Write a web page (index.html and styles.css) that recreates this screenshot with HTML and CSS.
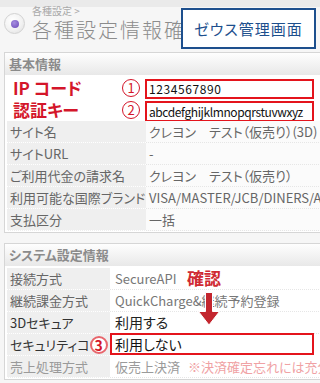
FILE: index.html
```html
<!DOCTYPE html>
<html lang="ja">
<head>
    <meta charset="UTF-8">
    <meta name="viewport" content="width=device-width, initial-scale=1.0">
    <title>各種設定情報確認</title>
    <link rel="stylesheet" href="styles.css">
</head>
<body>

    <div class="top">
        <div class="orb"><span></span></div>
        <div class="head-text">
            <div class="crumb">各種設定 &gt;</div>
            <h1>各種設定情報確認</h1>
        </div>
        <div class="zeus">ゼウス管理画面</div>
    </div>

    <section class="panel">
        <div class="panel-head">基本情報</div>
        <div class="rows">
            <div class="label key"><span class="callout">IP コード</span><span class="num">1</span></div>
            <div class="value boxed"><div class="mark digits">1234567890</div></div>

            <div class="label key"><span class="callout">認証キー</span><span class="num">2</span></div>
            <div class="value boxed"><div class="mark second">abcdefghijklmnopqrstuvwxyz</div></div>

            <div class="label">サイト名</div>
            <div class="value">クレヨン　テスト（仮売り）(3D)</div>

            <div class="label">サイトURL</div>
            <div class="value">-</div>

            <div class="label">ご利用代金の請求名</div>
            <div class="value">クレヨン　テスト（仮売り）</div>

            <div class="label">利用可能な国際ブランド</div>
            <div class="value">VISA/MASTER/JCB/DINERS/AMEX</div>

            <div class="label">支払区分</div>
            <div class="value">一括</div>
        </div>
    </section>

    <section class="panel system">
        <div class="panel-head">システム設定情報</div>
        <div class="rows">
            <div class="label">接続方式</div>
            <div class="value">SecureAPI</div>

            <div class="label">継続課金方式</div>
            <div class="value">QuickCharge&amp;継続予約登録</div>

            <div class="label dark">3Dセキュア</div>
            <div class="value dark">利用する</div>

            <div class="label dark"><span>セキュリティコ</span><span class="num big">3</span></div>
            <div class="value boxed"><div class="mark wide">利用しない</div></div>

            <div class="label faded">売上処理方式</div>
            <div class="value faded">仮売上決済<span class="note">※決済確定忘れには充分ご注意ください</span></div>
        </div>

        <div class="check">確認</div>
        <svg class="arrow" width="24" height="34" viewBox="0 0 24 34">
            <path d="M8.5 0.5 H15.5 V19.5 H22.5 L12 33 L1.5 19.5 H8.5 Z" fill="#c3262e" stroke="#fff" stroke-width="1"/>
        </svg>
    </section>

</body>
</html>
```

FILE: styles.css
```css
html, body {
    margin: 0;
    width: 320px;
    height: 383px;
    overflow: hidden;
}
body {
    font-family: 'Noto Sans CJK JP', 'Noto Sans', sans-serif;
    background: #f6f6f6;
    color: #666;
    font-feature-settings: "palt";
}
.top {
    position: relative;
    height: 52px;
    display: flex;
    padding-left: 4px;
    background: linear-gradient(#eaeaea 0, #eaeaea 7px, #f6f6f6 7px);
}
.orb {
    flex: none;
    width: 21px;
    height: 21px;
    margin-top: 13px;
    border-radius: 50%;
    box-sizing: border-box;
    border: 1px solid #d2d2d2;
    background: radial-gradient(circle at 40% 35%, #fff 0, #f2f2f2 55%, #dcdcdc 100%);
    display: flex;
    align-items: center;
    justify-content: center;
}
.orb span {
    width: 8px;
    height: 8px;
    border-radius: 50%;
    background: radial-gradient(circle at 40% 35%, #a68ee0, #6a48b8);
}
.head-text {
    margin-left: 7px;
}
.crumb {
    font-size: 10px;
    line-height: 10px;
    padding-top: 6px;
    color: #a8a8a8;
}
h1 {
    margin: 3px 0 0;
    font-size: 20px;
    line-height: 21px;
    font-weight: 300;
    letter-spacing: 2px;
    color: #8c8c8c;
    white-space: nowrap;
}
.zeus {
    position: absolute;
    left: 181px;
    top: 8px;
    width: 135px;
    height: 41px;
    box-sizing: border-box;
    border: 2px solid #1d4f8d;
    background: #fff;
    color: #1d4f8d;
    font-size: 15px;
    letter-spacing: 1px;
    display: flex;
    align-items: center;
    justify-content: center;
}
.panel {
    margin-left: 4px;
    width: 340px;
    border: 1px solid #d6d6d6;
    background: #fff;
}
.panel.system {
    position: relative;
    margin-top: 10px;
}
.panel-head {
    height: 22px;
    line-height: 22px;
    padding-left: 4px;
    background: linear-gradient(#fefefe, #e8e8e8);
    color: #8b8b8b;
    font-size: 13px;
    font-weight: bold;
}
.rows {
    display: grid;
    grid-template-columns: 139px 1fr;
    grid-auto-rows: 22px;
    margin: 2px 2px 1px;
}
.system .rows {
    grid-template-columns: 103px 1fr;
}
.label, .value {
    box-sizing: border-box;
    font-size: 13px;
    line-height: 21px;
    white-space: nowrap;
    overflow: hidden;
}
.label {
    display: flex;
    align-items: center;
    justify-content: space-between;
    padding: 0 4px 0 3px;
    background: #efefef;
    border-bottom: 1px dotted #fff;
    color: #666;
}
.value {
    padding-left: 3px;
    background: #fbfbfb;
    border-bottom: 1px dotted #e6e6e6;
    color: #666;
}
.system .value {
    padding-left: 5px;
    background: #fff;
    color: #777;
}
.label.key {
    background: #fff;
    padding: 0 6px 0 6px;
    overflow: visible;
}
.callout {
    color: #d4162a;
    font-size: 17px;
    line-height: 18px;
    font-weight: bold;
}
.num {
    flex: none;
    width: 18px;
    height: 18px;
    box-sizing: border-box;
    border-radius: 50%;
    border: 1.5px solid #d4162a;
    background: #fff;
    color: #d4162a;
    font-size: 13px;
    line-height: 15px;
    text-align: center;
}
.num.big {
    border: 2px solid #e8666c;
    font-weight: bold;
    font-size: 14px;
    line-height: 14px;
}
.value.boxed {
    padding: 0;
    background: #fff;
    border-bottom: none;
    overflow: visible;
}
.mark {
    margin: 2px 0 0 -1px;
    width: 169px;
    height: 20px;
    box-sizing: border-box;
    border: 2px solid #e4141c;
    padding-left: 2px;
    font-size: 12px;
    line-height: 16px;
    color: #111;
    background: #fff;
}
.mark.digits {
    letter-spacing: 0.6px;
}
.mark.second {
    height: 21px;
    line-height: 17px;
    letter-spacing: -0.4px;
}
.mark.wide {
    margin: -1px 0 0 0;
    width: 204px;
    height: 22px;
    padding-left: 3px;
    font-size: 14px;
    line-height: 18px;
}
.label.dark {
    color: #333;
}
.value.dark {
    color: #222;
    font-size: 14px;
}
.label.faded, .value.faded {
    color: #9a9a9a;
}
.note {
    margin-left: 8px;
    color: #f0a2a4;
}
.check {
    position: absolute;
    left: 182px;
    top: 25px;
    font-size: 17px;
    line-height: 18px;
    font-weight: bold;
    color: #d02a33;
}
.arrow {
    position: absolute;
    left: 192px;
    top: 48px;
}
```
